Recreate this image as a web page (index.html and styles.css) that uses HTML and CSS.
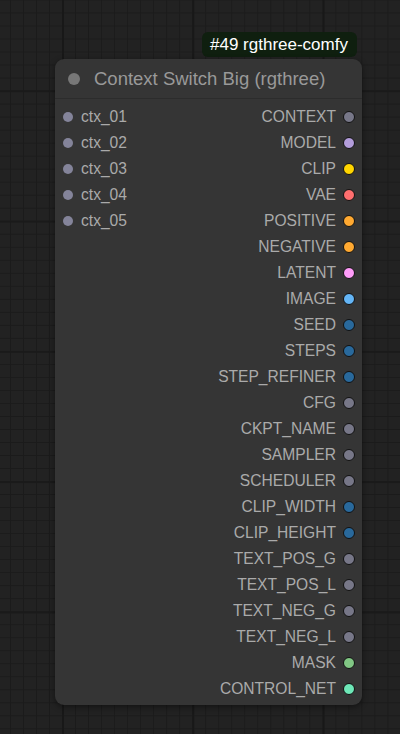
FILE: index.html
```html
<!DOCTYPE html>
<html>
<head>
<meta charset="utf-8">
<link rel="stylesheet" href="styles.css">
</head>
<body>
<div class="canvas">
  <div class="badge">#49 rgthree-comfy</div>
  <div class="node">
    <div class="title"><span class="title-dot"></span><span class="title-text">Context Switch Big (rgthree)</span></div>
    <div class="slots">
      <div class="inputs">
        <div class="row in"><span class="idot"></span><span>ctx_01</span></div>
        <div class="row in"><span class="idot"></span><span>ctx_02</span></div>
        <div class="row in"><span class="idot"></span><span>ctx_03</span></div>
        <div class="row in"><span class="idot"></span><span>ctx_04</span></div>
        <div class="row in"><span class="idot"></span><span>ctx_05</span></div>
      </div>
      <div class="outputs">
        <div class="row out"><span>CONTEXT</span><span class="odot c-grey"></span></div>
        <div class="row out"><span>MODEL</span><span class="odot c-model"></span></div>
        <div class="row out"><span>CLIP</span><span class="odot c-clip"></span></div>
        <div class="row out"><span>VAE</span><span class="odot c-vae"></span></div>
        <div class="row out"><span>POSITIVE</span><span class="odot c-cond"></span></div>
        <div class="row out"><span>NEGATIVE</span><span class="odot c-cond"></span></div>
        <div class="row out"><span>LATENT</span><span class="odot c-latent"></span></div>
        <div class="row out"><span>IMAGE</span><span class="odot c-image"></span></div>
        <div class="row out"><span>SEED</span><span class="odot c-int"></span></div>
        <div class="row out"><span>STEPS</span><span class="odot c-int"></span></div>
        <div class="row out"><span>STEP_REFINER</span><span class="odot c-int"></span></div>
        <div class="row out"><span>CFG</span><span class="odot c-grey"></span></div>
        <div class="row out"><span>CKPT_NAME</span><span class="odot c-grey"></span></div>
        <div class="row out"><span>SAMPLER</span><span class="odot c-grey"></span></div>
        <div class="row out"><span>SCHEDULER</span><span class="odot c-grey"></span></div>
        <div class="row out"><span>CLIP_WIDTH</span><span class="odot c-int"></span></div>
        <div class="row out"><span>CLIP_HEIGHT</span><span class="odot c-int"></span></div>
        <div class="row out"><span>TEXT_POS_G</span><span class="odot c-grey"></span></div>
        <div class="row out"><span>TEXT_POS_L</span><span class="odot c-grey"></span></div>
        <div class="row out"><span>TEXT_NEG_G</span><span class="odot c-grey"></span></div>
        <div class="row out"><span>TEXT_NEG_L</span><span class="odot c-grey"></span></div>
        <div class="row out"><span>MASK</span><span class="odot c-mask"></span></div>
        <div class="row out"><span>CONTROL_NET</span><span class="odot c-cnet"></span></div>
      </div>
    </div>
  </div>
</div>
</body>
</html>
```
FILE: styles.css
```css
html, body {
  margin: 0;
  padding: 0;
  width: 400px;
  height: 734px;
  overflow: hidden;
}
body {
  background-color: #222222;
  background-image:
    linear-gradient(to right, #181818 0, #181818 2px, transparent 2px),
    linear-gradient(to bottom, #1a1a1a 0, #1a1a1a 2px, transparent 2px),
    linear-gradient(to right, #1b1b1b 0, #1b1b1b 1px, transparent 1px),
    linear-gradient(to bottom, #1b1b1b 0, #1b1b1b 1px, transparent 1px);
  background-size: 130.3px 130.3px, 130.3px 130.3px, 13.03px 13.03px, 13.03px 13.03px;
  background-position: 62px 0, 0 -40px, 10px 0, 0 12.5px;
  font-family: "Liberation Sans", Arial, sans-serif;
}
.canvas {
  display: flex;
  flex-direction: column;
  align-items: flex-start;
  padding-top: 32px;
}
.badge {
  margin-left: 202px;
  height: 25px;
  line-height: 25px;
  padding: 0 9px 0 8px;
  background: #0f1f0f;
  color: #ffffff;
  font-size: 17px;
  border-radius: 6px;
  white-space: nowrap;
}
.node {
  margin-left: 55px;
  margin-top: 2px;
  width: 307px;
  height: 646px;
  background: #353535;
  border-radius: 9px;
  box-shadow: 0 2px 6px rgba(0,0,0,0.45);
  display: flex;
  flex-direction: column;
}
.title {
  height: 39px;
  border-bottom: 1px solid #2c2c2c;
  display: flex;
  align-items: center;
  padding-left: 13px;
  gap: 14px;
}
.title-dot {
  width: 12px;
  height: 12px;
  border-radius: 50%;
  background: #777777;
  flex: none;
}
.title-text {
  color: #999999;
  font-size: 18.5px;
  white-space: nowrap;
}
.slots {
  display: flex;
  justify-content: space-between;
  padding: 5px 7px 3px 8px;
}
.inputs, .outputs {
  display: flex;
  flex-direction: column;
}
.row {
  height: 26px;
  display: flex;
  align-items: center;
  color: #aaaaaa;
  font-size: 15.6px;
  white-space: nowrap;
}
.row.in { gap: 8px; }
.row.out { justify-content: flex-end; gap: 7px; }
.idot {
  width: 10px;
  height: 10px;
  border-radius: 50%;
  background: #84849a;
  flex: none;
}
.odot {
  width: 10px;
  height: 10px;
  border-radius: 50%;
  border: 1px solid #111111;
  flex: none;
}
.c-grey { background: #777788; }
.c-model { background: #b39ddb; }
.c-clip { background: #ffd500; }
.c-vae { background: #ff6e6e; }
.c-cond { background: #ffa931; }
.c-latent { background: #ff9cf9; }
.c-image { background: #64b5f6; }
.c-int { background: #29699c; }
.c-mask { background: #81c784; }
.c-cnet { background: #6ee7b7; }
```
